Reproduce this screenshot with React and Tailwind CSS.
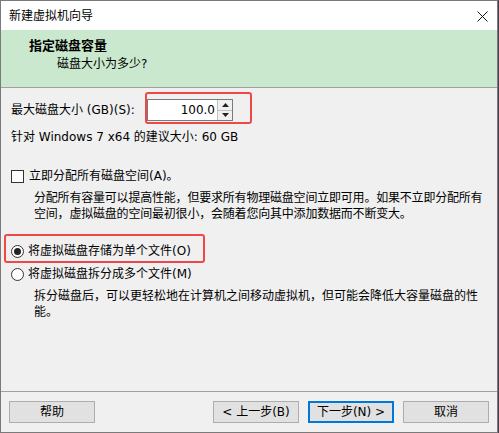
import React from 'react';

const font = { fontFamily: '"DejaVu Sans", "Noto Sans CJK SC", "Noto Sans", sans-serif' };

function Btn({ children, primary }) {
  return (
    <button
      className={`w-[86px] h-[22px] text-[12px] leading-none text-black bg-[#e1e1e1] flex items-center justify-center ${
        primary ? 'border-2 border-[#0078d7]' : 'border border-[#adadad]'
      }`}
      style={font}
    >
      {children}
    </button>
  );
}

export default function App() {
  return (
    <div className="w-[499px] h-[433px] bg-[#4a3f4f] text-[12px] text-black" style={font}>
      <div className="w-[498px] h-[433px] border border-[#7a7a7a] bg-[#f0f0f0] flex flex-col relative">
        {/* 标题栏 */}
        <div className="h-[29px] bg-white flex items-center justify-between pl-[8px] pr-[9px]">
          <span className="text-[12px] leading-none">新建虚拟机向导</span>
          <svg width="11" height="11" viewBox="0 0 11 11" className="mt-[1px]">
            <path d="M0.5 0.5 L10.5 10.5 M10.5 0.5 L0.5 10.5" stroke="#111" strokeWidth="1" fill="none" />
          </svg>
        </div>

        {/* 页眉 */}
        <div className="h-[58px] bg-[#cae8cd] border-b border-[#a0a0a0] pl-[28px] pt-[8px]">
          <p className="font-bold text-[13px] leading-[16px]">指定磁盘容量</p>
          <p className="pl-[28px] leading-[16px] mt-[2px]">磁盘大小为多少?</p>
        </div>

        {/* 内容 */}
        <div className="flex-1 px-[10px] pt-[11px]">
          <div className="flex items-center h-[22px]">
            <span className="w-[136px] leading-[16px] whitespace-nowrap">最大磁盘大小 (GB)(S):</span>
            <div className="flex h-[22px] bg-white border border-[#7a7a7a]">
              <input
                className="w-[69px] h-full text-right pr-[2px] bg-white outline-none text-[12px]"
                defaultValue="100.0"
                style={font}
              />
              <div className="w-[15px] flex flex-col border-l border-[#c0c0c0] bg-[#f0f0f0]">
                <div className="flex-1 flex items-center justify-center border-b border-[#c0c0c0]">
                  <svg width="7" height="4" viewBox="0 0 7 4"><path d="M3.5 0 L7 4 L0 4 Z" fill="#222" /></svg>
                </div>
                <div className="flex-1 flex items-center justify-center">
                  <svg width="7" height="4" viewBox="0 0 7 4"><path d="M0 0 L7 0 L3.5 4 Z" fill="#222" /></svg>
                </div>
              </div>
            </div>
          </div>
          <p className="mt-[8px] leading-[16px]">针对 Windows 7 x64 的建议大小: 60 GB</p>

          <label className="mt-[23px] flex items-center gap-[5px] leading-[16px]">
            <span className="w-[13px] h-[13px] border border-[#333] bg-white" />
            <span>立即分配所有磁盘空间(A)。</span>
          </label>
          <p className="pl-[23px] mt-[6px] leading-[16px] whitespace-nowrap tracking-[-0.2px]">
            分配所有容量可以提高性能，但要求所有物理磁盘空间立即可用。如果不立即分配所有
            <br />
            空间，虚拟磁盘的空间最初很小，会随着您向其中添加数据而不断变大。
          </p>

          <div className="mt-[21px] flex items-center gap-[4px] leading-[16px] h-[16px]">
            <span className="w-[13px] h-[13px] rounded-full border border-[#333] bg-white flex items-center justify-center">
              <span className="w-[7px] h-[7px] rounded-full bg-[#222]" />
            </span>
            <span>将虚拟磁盘存储为单个文件(O)</span>
          </div>
          <div className="mt-[7px] flex items-center gap-[4px] leading-[16px] h-[16px]">
            <span className="w-[13px] h-[13px] rounded-full border border-[#333] bg-white" />
            <span>将虚拟磁盘拆分成多个文件(M)</span>
          </div>
          <p className="pl-[23px] mt-[6px] leading-[16px] whitespace-nowrap">
            拆分磁盘后，可以更轻松地在计算机之间移动虚拟机，但可能会降低大容量磁盘的性
            <br />
            能。
          </p>
        </div>

        {/* 按钮栏 */}
        <div className="h-[41px] border-t border-[#a0a0a0] flex items-start pt-[9px] px-[8px]">
          <Btn>帮助</Btn>
          <div className="flex-1" />
          <div className="flex gap-[9px]">
            <Btn>&lt; 上一步(B)</Btn>
            <Btn primary>下一步(N) &gt;</Btn>
            <Btn>取消</Btn>
          </div>
        </div>

        {/* 红色标注框 */}
        <div className="absolute left-[144px] top-[91px] w-[107px] h-[32px] border-2 border-[#f04848] rounded-[3px] pointer-events-none" />
        <div className="absolute left-[3px] top-[233px] w-[201px] h-[29px] border-2 border-[#f04848] rounded-[3px] pointer-events-none" />
      </div>
    </div>
  );
}
